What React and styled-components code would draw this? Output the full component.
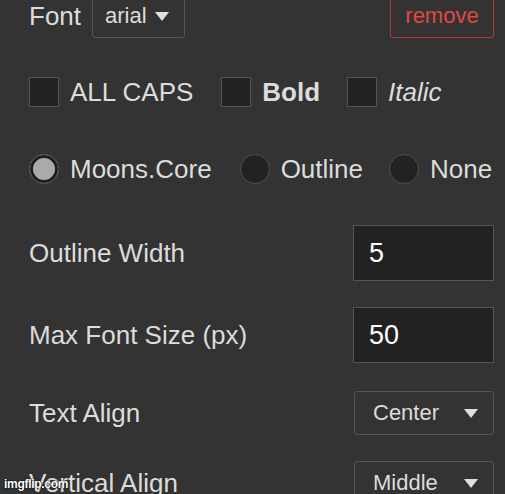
import styled, { createGlobalStyle } from 'styled-components'

const Global = createGlobalStyle`
    html, body {
        margin: 0;
        padding: 0;
        background: #333333;
        overflow: hidden;
    }
    body {
        font-family: "Liberation Sans", Arial, sans-serif;
        color: #dcdcdc;
    }
`

const Panel = styled.div`
    position: relative;
    width: 505px;
    height: 494px;
    overflow: hidden;
    box-sizing: border-box;
    padding: 0 11px 0 29px;
    display: flex;
    flex-direction: column;
`

const Row = styled.div`
    display: flex;
    align-items: center;
    justify-content: space-between;
    height: ${(p) => p.$h}px;
    margin-top: ${(p) => p.$mt}px;
    flex-shrink: 0;
`

const Group = styled.div`
    display: flex;
    align-items: center;
    gap: ${(p) => p.$gap || 0}px;
`

const Label = styled.span`
    font-size: 26px;
    line-height: 1;
    color: #dcdcdc;
    font-weight: ${(p) => (p.$bold ? 700 : 400)};
    font-style: ${(p) => (p.$italic ? 'italic' : 'normal')};
`

const Select = styled.div`
    box-sizing: border-box;
    display: flex;
    align-items: center;
    justify-content: space-between;
    width: ${(p) => p.$w}px;
    height: 44px;
    padding: 0 15px 0 ${(p) => p.$pl}px;
    border: 1px solid #555555;
    border-radius: 3px;
    background: #333333;
    font-size: 22px;
    color: #dcdcdc;
`

const Arrow = styled.span`
    width: 0;
    height: 0;
    border-left: 7px solid transparent;
    border-right: 7px solid transparent;
    border-top: 9px solid #e0e0e0;
`

const RemoveButton = styled.button`
    box-sizing: border-box;
    width: 104px;
    height: 44px;
    background: transparent;
    border: 1px solid #b13a3a;
    border-radius: 3px;
    color: #e04747;
    font-family: "Liberation Sans", Arial, sans-serif;
    font-size: 22px;
    padding: 0;
`

const Option = styled.label`
    display: flex;
    align-items: center;
    gap: 11px;
    margin-right: ${(p) => p.$mr || 0}px;
`

const Box = styled.span`
    box-sizing: border-box;
    width: 30px;
    height: 30px;
    background: #222222;
    border: 1px solid #555555;
`

const Radio = styled.span`
    box-sizing: border-box;
    width: 30px;
    height: 30px;
    border-radius: 50%;
    border: 1px solid #505050;
    background: ${(p) => (p.$on ? '#aaaaaa' : '#222222')};
    box-shadow: ${(p) => (p.$on ? 'inset 0 0 0 3px #1e1e1e' : 'none')};
`

const NumberInput = styled.input`
    box-sizing: border-box;
    width: 141px;
    height: 56px;
    padding: 0 0 0 15px;
    background: #222222;
    border: 1px solid #555555;
    color: #ffffff;
    font-family: "Liberation Sans", Arial, sans-serif;
    font-size: 27px;
    outline: none;
`

const Watermark = styled.span`
    position: absolute;
    left: 4px;
    bottom: 3px;
    font-size: 12px;
    font-weight: 700;
    color: #ffffff;
    text-shadow: 0 0 2px #000, 0 0 1px #000;
    letter-spacing: -0.3px;
`

function App() {
    return (
        <Panel>
            <Global />
            <Row $h={44} $mt={-6}>
                <Group $gap={11}>
                    <Label>Font</Label>
                    <Select $w={93} $pl={12}>
                        arial <Arrow />
                    </Select>
                </Group>
                <RemoveButton>remove</RemoveButton>
            </Row>

            <Row $h={30} $mt={39}>
                <Group>
                    <Option $mr={28}>
                        <Box />
                        <Label>ALL CAPS</Label>
                    </Option>
                    <Option $mr={27}>
                        <Box />
                        <Label $bold>Bold</Label>
                    </Option>
                    <Option>
                        <Box />
                        <Label $italic>Italic</Label>
                    </Option>
                </Group>
            </Row>

            <Row $h={30} $mt={47}>
                <Group>
                    <Option $mr={28}>
                        <Radio $on />
                        <Label>Moons.Core</Label>
                    </Option>
                    <Option $mr={26}>
                        <Radio />
                        <Label>Outline</Label>
                    </Option>
                    <Option>
                        <Radio />
                        <Label>None</Label>
                    </Option>
                </Group>
            </Row>

            <Row $h={56} $mt={41}>
                <Label>Outline Width</Label>
                <NumberInput defaultValue="5" />
            </Row>

            <Row $h={56} $mt={26}>
                <Label>Max Font Size (px)</Label>
                <NumberInput defaultValue="50" />
            </Row>

            <Row $h={44} $mt={28}>
                <Label>Text Align</Label>
                <Select $w={140} $pl={18}>
                    Center <Arrow />
                </Select>
            </Row>

            <Row $h={44} $mt={26}>
                <Label>Vertical Align</Label>
                <Select $w={140} $pl={18}>
                    Middle <Arrow />
                </Select>
            </Row>

            <Watermark>imgflip.com</Watermark>
        </Panel>
    )
}

export default App
